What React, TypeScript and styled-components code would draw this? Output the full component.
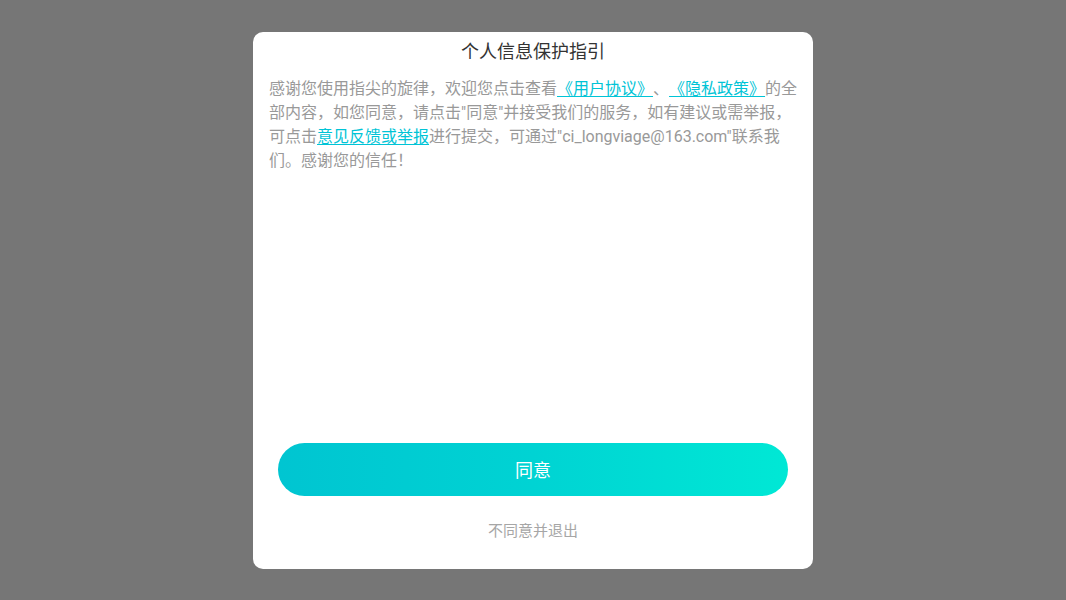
import React from 'react';
import styled, { createGlobalStyle } from 'styled-components';

const GlobalStyle = createGlobalStyle`
    html, body {
        margin: 0;
        padding: 0;
        background: #767676;
        font-family: Roboto, "Noto Sans CJK SC", sans-serif;
    }
`

const Overlay = styled.div`
    width: 100%;
    height: 600px;
    display: flex;
    align-items: center;
    justify-content: center;
    background: #767676;
`
const Dialog = styled.div`
    width: 560px;
    height: 537px;
    box-sizing: border-box;
    background: #fff;
    border-radius: 10px;
    display: flex;
    flex-direction: column;
    padding: 8px 0 28px;
`
const Title = styled.h1`
    margin: 0;
    font-size: 18px;
    line-height: 24px;
    font-weight: 400;
    color: #333;
    text-align: center;
`
const Body = styled.p`
    flex: 1;
    margin: 13px 0 0;
    padding: 0 13px 0 16px;
    font-size: 16px;
    line-height: 24px;
    color: #999;
    text-spacing-trim: space-all;
    font-feature-settings: "halt" 0, "chws" 0;
`
const Link = styled.a`
    color: #00c4d6;
    text-decoration: underline;
    text-underline-offset: 2px;
    cursor: pointer;
`
const AgreeBtn = styled.button`
    margin: 0 25px;
    height: 53px;
    border: none;
    border-radius: 27px;
    background: linear-gradient(90deg, #00c5d1 0%, #00d3d3 50%, #00e8d5 100%);
    color: #fff;
    font-family: inherit;
    font-size: 18px;
    cursor: pointer;
`
const ExitBtn = styled.button`
    margin-top: 25px;
    background: none;
    border: none;
    padding: 0;
    font-family: inherit;
    font-size: 15px;
    line-height: 20px;
    color: #a6a6a6;
    cursor: pointer;
`

export default function App() {
    return (
        <>
            <GlobalStyle />
            <Overlay>
                <Dialog>
                    <Title>个人信息保护指引</Title>
                    <Body>
                        感谢您使用指尖的旋律，欢迎您点击查看<Link>《用户协议》</Link>、<Link>《隐私政策》</Link>的全部内容，如您同意，请点击"同意"并接受我们的服务，如有建议或需举报，可点击<Link>意见反馈或举报</Link>进行提交，可通过"ci_longviage@163.com"联系我们。感谢您的信任！
                    </Body>
                    <AgreeBtn>同意</AgreeBtn>
                    <ExitBtn>不同意并退出</ExitBtn>
                </Dialog>
            </Overlay>
        </>
    )
}
